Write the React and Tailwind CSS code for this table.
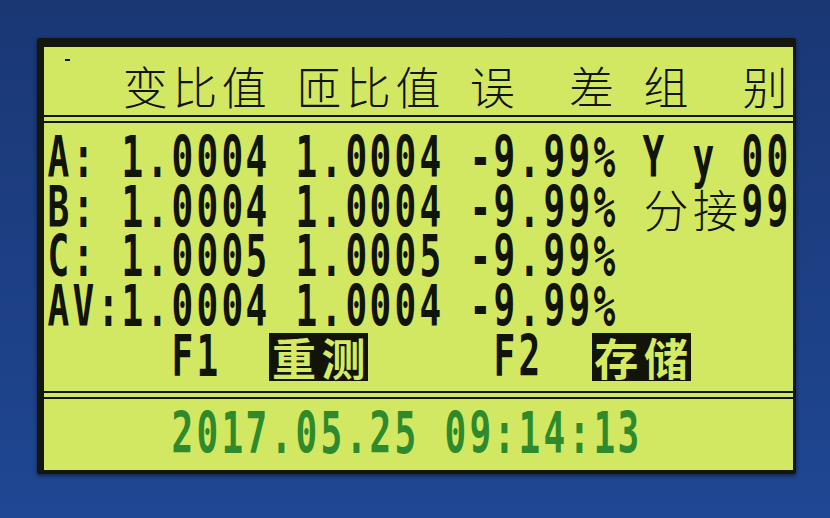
import React from "react";

const header = "   变比值 匝比值 误  差 组  别";

const rows = [
  ["A: 1.0004 1.0004 -9.99% Y y 00"],
  ["B: 1.0004 1.0004 -9.99% 分接99"],
  ["C: 1.0005 1.0005 -9.99%"],
  ["AV:1.0004 1.0004 -9.99%"],
  ["     F1  ", { inv: "重测" }, "     F2  ", { inv: "存储" }],
];

const isWide = (ch) => /[\u4e00-\u9fff]/.test(ch);

const Glyph = ({ ch, thin }) => {
  if (isWide(ch)) {
    return (
      <span
        className={
          thin
            ? "flex w-[49.6px] shrink-0 justify-center font-['Noto_Sans_CJK_SC',sans-serif] text-[45px] font-light leading-none"
            : "flex w-[49.6px] shrink-0 justify-center font-['Noto_Sans_CJK_SC',sans-serif] text-[44px] font-bold leading-none"
        }
      >
        {ch}
      </span>
    );
  }
  return (
    <span className="flex w-[24.8px] shrink-0 justify-center">
      <span className="inline-block scale-x-[0.88] scale-y-[1.38] font-['DejaVu_Sans_Mono',monospace] text-[41px] font-bold leading-none">
        {ch === " " ? "\u00a0" : ch}
      </span>
    </span>
  );
};

const Line = ({ parts, className }) => (
  <div className={className}>
    {parts.map((p, i) =>
      typeof p === "string" ? (
        Array.from(p).map((ch, j) => <Glyph key={i + "-" + j} ch={ch} thin />)
      ) : (
        <span key={i} className="flex h-[48px] items-center bg-[#121407] text-[#d6ea66]">
          {Array.from(p.inv).map((ch, j) => (
            <Glyph key={j} ch={ch} />
          ))}
        </span>
      )
    )}
  </div>
);

const App = () => {
  return (
    <main className="h-[518px] w-[830px] overflow-hidden bg-linear-to-b from-[#1a3774] to-[#1f4793] pl-[37px] pt-[38px]">
      {/* LCD frame */}
      <div className="w-[759px] rounded-[2px] bg-[#15160e] pb-[4px] pl-[7px] pr-[3px] pt-[9px] shadow-[0_2px_4px_rgba(0,0,0,0.5)]">
        <div className="flex h-[423px] flex-col bg-[#d3e862] text-[#111408]">
          {/* header */}
          <div className="relative flex h-[68px] items-center pl-[2px] pt-[8px]">
            <span className="absolute left-[21px] top-[12px] h-[2px] w-[5px] bg-[#111408]" />
            <Line parts={[header]} className="flex items-center" />
          </div>
          <div className="h-[2px] bg-[#111408]" />
          <div className="h-[4px]" />
          <div className="h-[2px] bg-[#111408]" />

          {/* data rows */}
          <div className="flex h-[268px] flex-col pl-[2px] pt-[11px]">
            {rows.map((r, i) => (
              <Line key={i} parts={r} className="flex h-[49.6px] items-center" />
            ))}
          </div>

          <div className="h-[2px] bg-[#111408]" />
          <div className="h-[4px]" />
          <div className="h-[2px] bg-[#111408]" />

          {/* clock */}
          <div className="flex flex-1 items-center pl-[2px] text-[#2e8a2c]">
            <Line parts={["     2017.05.25 09:14:13"]} className="flex items-center" />
          </div>
        </div>
      </div>
    </main>
  );
};

export default App;
